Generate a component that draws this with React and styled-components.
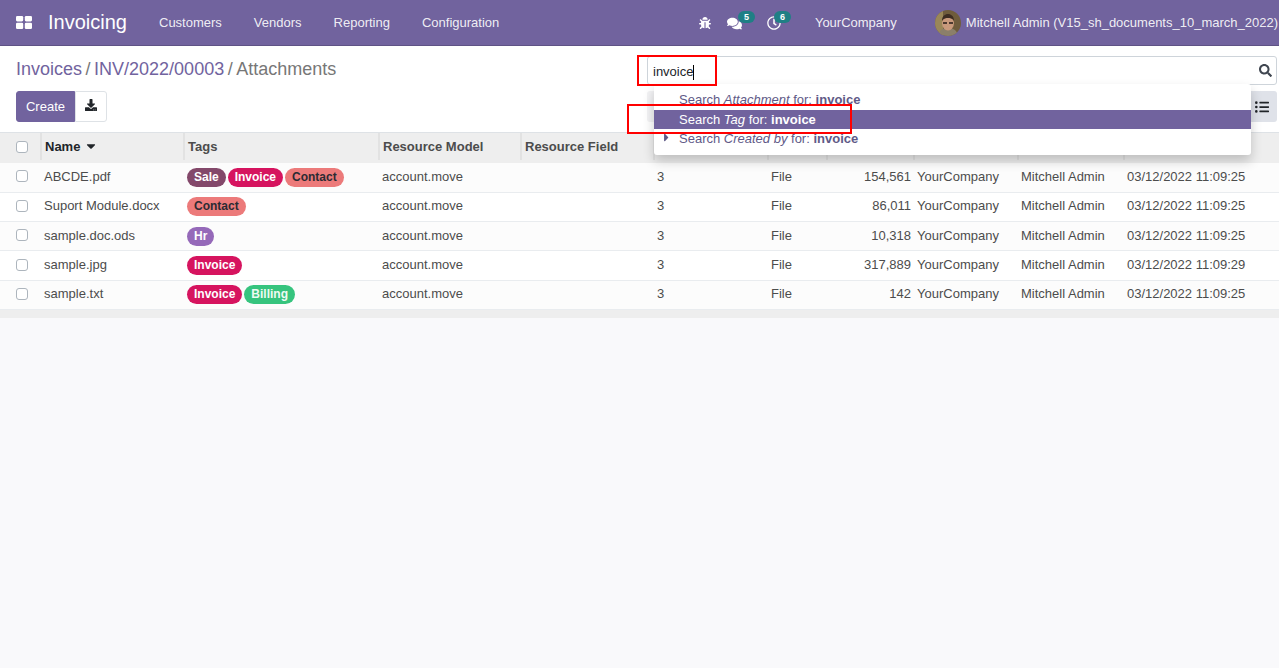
import { createGlobalStyle } from 'styled-components'
import styled from 'styled-components'
import { FaBug, FaComments, FaRegClock, FaDownload, FaSearch, FaListUl, FaCaretDown, FaCaretRight } from 'react-icons/fa'

const GlobalStyle = createGlobalStyle`
  html, body {
    margin: 0;
    height: 100%;
    background: #f9f9fb;
    font-family: "Liberation Sans", Arial, sans-serif;
    font-size: 13px;
    color: #4c4c4c;
  }
`

const Page = styled.div`
  position: relative;
  height: 668px;
  overflow: hidden;
`

const NavBar = styled.header`
  display: flex;
  align-items: center;
  height: 45px;
  background: #71639e;
  border-bottom: 1px solid #5f5385;
  color: #fff;
`

const AppsIcon = styled.svg`
  width: 16px;
  height: 13px;
  margin-left: 16px;
`

const AppName = styled.div`
  font-size: 20px;
  margin-left: 16px;
  width: 111px;
`

const MenuItem = styled.div`
  color: rgba(255, 255, 255, 0.9);
  margin-right: 32px;
`

const NavRight = styled.div`
  display: flex;
  align-items: center;
  margin-left: auto;
  padding-right: 1px;
`

const NavIcon = styled.div`
  position: relative;
  display: flex;
  width: 16px;
  font-size: ${p => p.$size || 14}px;
  margin-right: ${p => p.$gap || 0}px;
  margin-top: ${p => p.$drop || 0}px;
`

const Badge = styled.span`
  position: absolute;
  top: -5px;
  left: ${p => p.$left}px;
  width: 17px;
  height: 12px;
  border-radius: 6px;
  background: #1f7f85;
  color: #fff;
  font-size: 9px;
  font-weight: 700;
  line-height: 12px;
  text-align: center;
`

const CompanyName = styled.div`
  color: rgba(255, 255, 255, 0.9);
  margin-right: 38px;
`

const Avatar = styled.svg`
  width: 26px;
  height: 26px;
  border-radius: 50%;
  margin-right: 5px;
`

const UserName = styled.div`
  color: rgba(255, 255, 255, 0.9);
  white-space: nowrap;
`

const ControlPanel = styled.div`
  height: 87px;
  background: #fff;
  border-bottom: 1px solid #dee2e6;
  box-sizing: border-box;
  padding: 10px 2px 0 16px;
`

const PanelRow = styled.div`
  display: flex;
  justify-content: space-between;
  align-items: flex-start;
`

const Breadcrumb = styled.div`
  display: flex;
  gap: 3.5px;
  font-size: 18px;
  line-height: 24px;
  margin-top: 1px;
  color: #71639e;
`

const Current = styled.span`
  color: #777;
`

const SearchBox = styled.div`
  display: flex;
  align-items: center;
  justify-content: space-between;
  width: 630px;
  height: 29px;
  box-sizing: border-box;
  padding: 0 4px 0 5px;
  border: 1px solid #ced4da;
  border-radius: 3px;
  color: #212529;
  background: #fff;
`

const SearchText = styled.span`
  padding-top: 3px;
`

const Caret = styled.span`
  border-right: 1px solid #000;
  height: 15px;
  display: inline-block;
  vertical-align: middle;
`

const SearchIcon = styled(FaSearch)`
  font-size: 13px;
  color: #3f4650;
`

const ButtonRow = styled(PanelRow)`
  margin-top: 6px;
`

const CreateButton = styled.button`
  height: 31px;
  width: 59px;
  border: 1px solid #71639e;
  border-radius: 3px 0 0 3px;
  background: #71639e;
  color: #fff;
  font: inherit;
  padding: 0;
`

const ImportButton = styled.button`
  height: 31px;
  width: 32px;
  border: 1px solid #dee2e6;
  border-radius: 0 3px 3px 0;
  background: #fff;
  color: #212529;
  font-size: 12px;
  padding: 0;
`

const Group = styled.div`
  display: flex;
`

const FilterBar = styled.div`
  width: 602px;
  height: 31px;
  border-radius: 3px;
  background: #f3f3f5;
`

const ViewButton = styled.button`
  height: 31px;
  width: 28px;
  border: none;
  border-radius: 0 3px 3px 0;
  background: #dfe2e9;
  color: #212529;
  font-size: 14px;
  padding: 3px 2px 0 0;
`

const Table = styled.table`
  width: 1279px;
  table-layout: fixed;
  border-collapse: collapse;
`

const HeadCell = styled.th`
  height: 30px;
  box-sizing: border-box;
  padding: 0 4px 4px;
  background: #eeeeee;
  text-align: left;
  font-weight: 700;
  color: ${p => (p.$active ? '#212529' : '#4c4c4c')};
  white-space: nowrap;
  position: relative;
  &::before {
    content: '';
    position: absolute;
    left: -1px;
    top: 0;
    bottom: 3px;
    border-left: 2px solid #e2e2e2;
  }
`

const CheckHead = styled.th`
  height: 30px;
  box-sizing: border-box;
  padding: 0 0 2px 16px;
  background: #eeeeee;
`

const SortIcon = styled(FaCaretDown)`
  font-size: 14px;
  margin-left: 4px;
  vertical-align: -2px;
  color: #212529;
`

const Row = styled.tr`
  height: 29.3px;
  background: ${p => (p.$odd ? '#fcfcfc' : '#fff')};
  border-bottom: 1px solid #e9ecef;
`

const Cell = styled.td`
  box-sizing: border-box;
  padding: 0 3px 2px;
  white-space: nowrap;
  text-align: ${p => (p.$right ? 'right' : 'left')};
  overflow: hidden;
`

const CheckCell = styled(Cell)`
  padding-left: 16px;
`

const TagCell = styled(Cell)`
  padding-bottom: 0;
`

const Check = styled.span`
  display: block;
  width: 12px;
  height: 12px;
  box-sizing: border-box;
  border: 1px solid #adb5bd;
  border-radius: 3px;
  background: #fff;
`

const Tags = styled.div`
  display: flex;
  gap: 2px;
`

const Tag = styled.span`
  display: block;
  height: 19px;
  line-height: 18px;
  padding: 0 7px;
  border-radius: 10px;
  font-size: 12px;
  font-weight: 700;
  background: ${p => p.$bg};
  color: ${p => p.$fg || '#fff'};
`

const TableEnd = styled.div`
  height: 8px;
  background: #eeeeee;
`

const Dropdown = styled.ul`
  position: absolute;
  left: 654px;
  top: 84px;
  width: 597px;
  height: 71px;
  box-sizing: border-box;
  margin: 0;
  padding: 6px 0 0;
  list-style: none;
  background: #fff;
  border-radius: 3px;
  box-shadow: 0 6px 12px rgba(0, 0, 0, 0.2);
  color: #5f5a87;
`

const Option = styled.li`
  position: relative;
  height: 19.5px;
  line-height: 19px;
  padding-left: 25px;
  background: ${p => (p.$active ? '#71639e' : 'transparent')};
  color: ${p => (p.$active ? '#fff' : 'inherit')};
  b { font-weight: 700; }
`

const Expander = styled(FaCaretRight)`
  position: absolute;
  left: 6px;
  top: 2px;
  font-size: 13px;
`

const RedBox = styled.div`
  position: absolute;
  left: ${p => p.$x}px;
  top: ${p => p.$y}px;
  width: ${p => p.$w}px;
  height: ${p => p.$h}px;
  box-sizing: border-box;
  border: 2px solid #f00;
`

const widths = [41, 143, 195, 142, 133, 114, 59, 87, 104, 106, 155]

const TAG = {
  Sale: { $bg: '#83486a' },
  Invoice: { $bg: '#d6145f' },
  Contact: { $bg: '#ec7a7a', $fg: '#2b2b33' },
  Hr: { $bg: '#9569b9' },
  Billing: { $bg: '#36c47e', $fg: '#eefaf3' },
}

const rows = [
  { name: 'ABCDE.pdf', tags: ['Sale', 'Invoice', 'Contact'], size: '154,561', date: '03/12/2022 11:09:25' },
  { name: 'Suport Module.docx', tags: ['Contact'], size: '86,011', date: '03/12/2022 11:09:25' },
  { name: 'sample.doc.ods', tags: ['Hr'], size: '10,318', date: '03/12/2022 11:09:25' },
  { name: 'sample.jpg', tags: ['Invoice'], size: '317,889', date: '03/12/2022 11:09:29' },
  { name: 'sample.txt', tags: ['Invoice', 'Billing'], size: '142', date: '03/12/2022 11:09:25' },
]

export default () => {
  return (
    <Page>
      <GlobalStyle />
      <NavBar>
        <AppsIcon viewBox="0 0 16 13">
          <rect x="0" y="0" width="7.2" height="5.4" rx="1.3" fill="#fff" />
          <rect x="8.8" y="0" width="7.2" height="5.4" rx="1.3" fill="#fff" />
          <rect x="0" y="6.8" width="7.2" height="6.2" rx="1.3" fill="#fff" />
          <rect x="8.8" y="6.8" width="7.2" height="6.2" rx="1.3" fill="#fff" />
        </AppsIcon>
        <AppName>Invoicing</AppName>
        <MenuItem>Customers</MenuItem>
        <MenuItem>Vendors</MenuItem>
        <MenuItem>Reporting</MenuItem>
        <MenuItem>Configuration</MenuItem>
        <NavRight>
          <NavIcon $size={12} $gap={12} $drop={1}><FaBug /></NavIcon>
          <NavIcon $size={15} $gap={24} $drop={1}><FaComments /><Badge $left={11}>5</Badge></NavIcon>
          <NavIcon $size={14} $gap={32} $drop={1}><FaRegClock /><Badge $left={7}>6</Badge></NavIcon>
          <CompanyName>YourCompany</CompanyName>
          <Avatar viewBox="0 0 26 26">
            <rect width="26" height="26" fill="#6f5c3c" />
            <rect x="0" y="0" width="8" height="26" fill="#9a8758" />
            <path d="M3 26c1-6 5-8 10-8s9 2 10 8z" fill="#8b7f6a" />
            <ellipse cx="13" cy="13" rx="6" ry="7.5" fill="#c99a7c" />
            <path d="M7 11c0-5 3-7 6-7s6 2 6 7c-2-3-4-3-6-3s-4 0-6 3z" fill="#3d2d22" />
            <path d="M8 12h4v2H8zM14 12h4v2h-4z" fill="#4d3a30" />
          </Avatar>
          <UserName>Mitchell Admin (V15_sh_documents_10_march_2022)</UserName>
        </NavRight>
      </NavBar>

      <ControlPanel>
        <PanelRow>
          <Breadcrumb>
            <span>Invoices</span><Current>/</Current>
            <span>INV/2022/00003</span><Current>/</Current>
            <Current>Attachments</Current>
          </Breadcrumb>
          <SearchBox>
            <SearchText>invoice<Caret /></SearchText>
            <SearchIcon />
          </SearchBox>
        </PanelRow>
        <ButtonRow>
          <Group>
            <CreateButton>Create</CreateButton>
            <ImportButton><FaDownload /></ImportButton>
          </Group>
          <Group>
            <FilterBar />
            <ViewButton><FaListUl /></ViewButton>
          </Group>
        </ButtonRow>
      </ControlPanel>

      <Table>
        <colgroup>
          {widths.map((w, i) => <col key={i} width={w} />)}
        </colgroup>
        <thead>
          <tr>
            <CheckHead><Check /></CheckHead>
            <HeadCell $active>Name<SortIcon /></HeadCell>
            <HeadCell>Tags</HeadCell>
            <HeadCell>Resource Model</HeadCell>
            <HeadCell>Resource Field</HeadCell>
            {/* labels of the remaining columns sit under the open dropdown */}
            <HeadCell />
            <HeadCell />
            <HeadCell />
            <HeadCell />
            <HeadCell />
            <HeadCell />
          </tr>
        </thead>
        <tbody>
          {rows.map((r, i) => (
            <Row key={r.name} $odd={i % 2 === 0}>
              <CheckCell><Check /></CheckCell>
              <Cell>{r.name}</Cell>
              <TagCell>
                <Tags>
                  {r.tags.map(t => <Tag key={t} {...TAG[t]}>{t}</Tag>)}
                </Tags>
              </TagCell>
              <Cell>account.move</Cell>
              <Cell></Cell>
              <Cell>3</Cell>
              <Cell>File</Cell>
              <Cell $right>{r.size}</Cell>
              <Cell>YourCompany</Cell>
              <Cell>Mitchell Admin</Cell>
              <Cell>{r.date}</Cell>
            </Row>
          ))}
        </tbody>
      </Table>
      <TableEnd />

      <Dropdown>
        <Option>Search <i>Attachment</i> for: <b>invoice</b></Option>
        <Option $active>Search <i>Tag</i> for: <b>invoice</b></Option>
        <Option><Expander />Search <i>Created by</i> for: <b>invoice</b></Option>
      </Dropdown>
      <RedBox $x={637} $y={55} $w={80} $h={31} />
      <RedBox $x={627} $y={104} $w={225} $h={30} />
    </Page>
  )
}
